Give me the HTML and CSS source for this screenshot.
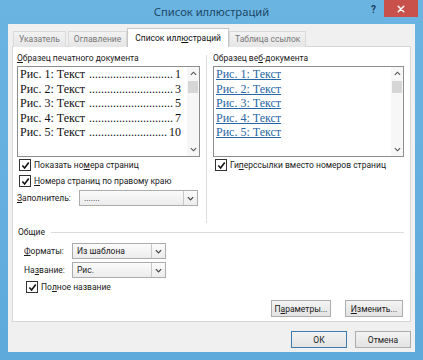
FILE: index.html
```html
<!DOCTYPE html>
<html lang="ru">
<head>
<meta charset="UTF-8" />
<title>Список иллюстраций</title>
<link rel="stylesheet" href="styles.css">
</head>
<body>

<div class="window">
  <!-- Title bar -->
  <div class="titlebar">
    <span></span>
    <h1 class="title">Список иллюстраций</h1>
    <div class="controls">
      <span class="help">?</span>
      <span class="close">
        <svg viewBox="0 0 10 10" width="8" height="8">
          <path d="M1.5 1.5 L8.5 8.5 M8.5 1.5 L1.5 8.5" stroke="#fff" stroke-width="1.8" stroke-linecap="round" />
        </svg>
      </span>
    </div>
  </div>

  <div class="client">
    <div class="tabs">
      <div class="tab">Указатель</div>
      <div class="tab">Оглавление</div>
      <div class="tab active">Список илл<u>ю</u>страций</div>
      <div class="tab">Таблица ссылок</div>
    </div>

    <div class="panel">
      <div class="samples">
        <!-- Print preview -->
        <div class="sample">
          <div class="caption"><u>О</u>бразец печатного документа</div>
          <div class="listbox">
            <div class="items">
              <div class="item"><span>Рис. 1: Текст</span><span class="leader">............................</span><span>1</span></div>
              <div class="item"><span>Рис. 2: Текст</span><span class="leader">............................</span><span>3</span></div>
              <div class="item"><span>Рис. 3: Текст</span><span class="leader">............................</span><span>5</span></div>
              <div class="item"><span>Рис. 4: Текст</span><span class="leader">............................</span><span>7</span></div>
              <div class="item"><span>Рис. 5: Текст</span><span class="leader">..........................</span><span>10</span></div>
            </div>
            <div class="scrollbar">
              <svg class="arrow" viewBox="0 0 8 5" width="7" height="5"><path d="M1 4 L4 1 L7 4" fill="none" stroke="#555" stroke-width="1.3" /></svg>
              <div class="thumb"></div>
              <div class="track"></div>
              <svg class="arrow" viewBox="0 0 8 5" width="7" height="5"><path d="M1 1 L4 4 L7 1" fill="none" stroke="#555" stroke-width="1.3" /></svg>
            </div>
          </div>
          <label class="check first">
            <span class="box"><svg viewBox="0 0 10 10" width="9" height="9"><path d="M1.5 5 L4 7.8 L8.6 1.6" fill="none" stroke="#111" stroke-width="1.7" /></svg></span>
            Показать но<u>м</u>ера страниц
          </label>
          <label class="check">
            <span class="box"><svg viewBox="0 0 10 10" width="9" height="9"><path d="M1.5 5 L4 7.8 L8.6 1.6" fill="none" stroke="#111" stroke-width="1.7" /></svg></span>
            <u>Н</u>омера страниц по правому краю
          </label>
          <div class="field fill">
            <span class="label"><u>З</u>аполнитель:</span>
            <div class="combo wide">
              <span class="value">.......</span>
              <span class="drop"><svg viewBox="0 0 8 5" width="7" height="5"><path d="M1 1 L4 4 L7 1" fill="none" stroke="#444" stroke-width="1.4" /></svg></span>
            </div>
          </div>
        </div>

        <div class="divider"></div>

        <!-- Web preview -->
        <div class="sample">
          <div class="caption">Образец ве<u>б</u>-документа</div>
          <div class="listbox">
            <div class="items links">
              <a class="item">Рис. 1: Текст</a>
              <a class="item">Рис. 2: Текст</a>
              <a class="item">Рис. 3: Текст</a>
              <a class="item">Рис. 4: Текст</a>
              <a class="item">Рис. 5: Текст</a>
            </div>
            <div class="scrollbar">
              <svg class="arrow" viewBox="0 0 8 5" width="7" height="5"><path d="M1 4 L4 1 L7 4" fill="none" stroke="#555" stroke-width="1.3" /></svg>
              <div class="thumb"></div>
              <div class="track"></div>
              <svg class="arrow" viewBox="0 0 8 5" width="7" height="5"><path d="M1 1 L4 4 L7 1" fill="none" stroke="#555" stroke-width="1.3" /></svg>
            </div>
          </div>
          <label class="check first">
            <span class="box"><svg viewBox="0 0 10 10" width="9" height="9"><path d="M1.5 5 L4 7.8 L8.6 1.6" fill="none" stroke="#111" stroke-width="1.7" /></svg></span>
            Ги<u>п</u>ерссылки вместо номеров страниц
          </label>
        </div>
      </div>

      <!-- General -->
      <div class="general">
        <div class="group-title"><span>Общие</span><span class="rule"></span></div>
        <div class="field">
          <span class="label short"><u>Ф</u>орматы:</span>
          <div class="combo">
            <span class="value">Из шаблона</span>
            <span class="drop"><svg viewBox="0 0 8 5" width="7" height="5"><path d="M1 1 L4 4 L7 1" fill="none" stroke="#444" stroke-width="1.4" /></svg></span>
          </div>
        </div>
        <div class="field">
          <span class="label short">На<u>з</u>вание:</span>
          <div class="combo">
            <span class="value">Рис.</span>
            <span class="drop"><svg viewBox="0 0 8 5" width="7" height="5"><path d="M1 1 L4 4 L7 1" fill="none" stroke="#444" stroke-width="1.4" /></svg></span>
          </div>
        </div>
        <label class="check">
          <span class="box"><svg viewBox="0 0 10 10" width="9" height="9"><path d="M1.5 5 L4 7.8 L8.6 1.6" fill="none" stroke="#111" stroke-width="1.7" /></svg></span>
          По<u>л</u>ное название
        </label>
      </div>

      <div class="panel-buttons">
        <button class="btn params">П<u>а</u>раметры...</button>
        <button class="btn edit"><u>И</u>зменить...</button>
      </div>
    </div>

    <div class="footer">
      <button class="btn ok">ОК</button>
      <button class="btn cancel">Отмена</button>
    </div>
  </div>
</div>

</body>
</html>
```

FILE: styles.css
```css
body {
  margin: 0;
  width: 423px;
  height: 360px;
  overflow: hidden;
  background: #64afde;
  font-family: Roboto, 'Noto Sans', sans-serif;
  font-size: 8.5px;
  color: #1a1a1a;
}
u {
  text-decoration-thickness: 1px;
  text-underline-offset: 1px;
}
.window {
  width: 423px;
  height: 360px;
  display: flex;
  flex-direction: column;
  background: linear-gradient(#6ab4e2, #5eaadb);
}

/* Title bar */
.titlebar {
  height: 24px;
  display: grid;
  grid-template-columns: 1fr auto 1fr;
  align-items: start;
}
.title {
  margin: 0;
  font-family: 'Noto Sans', sans-serif;
  font-weight: 400;
  font-size: 11.2px;
  line-height: 24px;
  color: #1d4866;
}
.controls {
  display: flex;
  justify-content: flex-end;
  align-items: flex-start;
  padding-right: 5px;
}
.help {
  font-weight: 700;
  font-size: 10px;
  line-height: 12px;
  margin-top: 4px;
  margin-right: 8px;
  color: #1d3e5c;
}
.close {
  width: 34px;
  height: 17px;
  background: #c9514b;
  display: flex;
  justify-content: center;
  align-items: center;
}

/* Client area */
.client {
  flex: 1;
  margin: 0 8px 8px;
  background: #f0f0f0;
  display: flex;
  flex-direction: column;
}
.tabs {
  display: flex;
  align-items: flex-end;
  height: 23px;
  padding-left: 5px;
  margin-bottom: -1px;
  position: relative;
  z-index: 1;
}
.tab {
  height: 15px;
  line-height: 15px;
  padding: 0 5px;
  margin-right: 2px;
  color: #787878;
  background: linear-gradient(#f2f2f2, #e6e6e6);
  border: 1px solid #d9d9d9;
  border-bottom: none;
}
.tab.active {
  height: 18px;
  line-height: 18px;
  margin: 0 0 0 -2px;
  padding: 0 7px;
  color: #111;
  background: #fff;
  border-color: #c6c6c6;
}
.tab.active + .tab {
  margin-left: 0;
}
.panel {
  margin: 0 4px;
  height: 276px;
  box-sizing: border-box;
  background: #fff;
  border: 1px solid #d6d6d6;
  display: flex;
  flex-direction: column;
}

/* Samples */
.samples {
  display: grid;
  grid-template-columns: 183px 1px 191px;
  column-gap: 6px;
  padding: 5px 0 0 4px;
  height: 176px;
  box-sizing: border-box;
}
.caption {
  height: 13px;
  line-height: 13px;
  margin-bottom: 1px;
}
.divider {
  background: #dcdcdc;
  margin-top: 3px;
}
.listbox {
  height: 91px;
  box-sizing: border-box;
  border: 1px solid #8e8e8e;
  display: flex;
}
.items {
  flex: 1;
  min-width: 0;
  padding: 0 6px 0 2px;
  font-family: 'Liberation Serif', 'Times New Roman', serif;
  font-size: 12px;
  line-height: 14.5px;
  color: #111;
}
.item {
  display: flex;
  justify-content: space-between;
  white-space: nowrap;
}
.leader {
  margin-left: auto;
  padding-right: 2px;
}
.links .item {
  display: block;
  color: #2867a3;
  text-decoration: underline;
  text-decoration-thickness: 1px;
}
.scrollbar {
  width: 12px;
  background: #f7f7f7;
  display: flex;
  flex-direction: column;
  align-items: center;
}
.arrow {
  margin: 4px 0;
}
.thumb {
  width: 10px;
  height: 12px;
  margin-top: 1px;
  background: #d6d6d6;
}
.track {
  flex: 1;
}

/* Checkboxes */
.check {
  display: flex;
  align-items: center;
  height: 12px;
  margin-top: 4px;
  padding-left: 2px;
}
.check.first {
  margin-top: 2px;
}
.box {
  width: 10px;
  height: 10px;
  border: 1px solid #333;
  background: #fff;
  margin-right: 3px;
  display: flex;
  justify-content: center;
  align-items: center;
}

/* Fields */
.field {
  display: flex;
  align-items: center;
  margin-top: 3px;
}
.label {
  width: 62px;
}
.label.short {
  width: 48px;
}
.combo {
  width: 94px;
  height: 16px;
  box-sizing: border-box;
  border: 1px solid #acacac;
  background: linear-gradient(#fbfbfb, #ececec);
  display: flex;
}
.combo.wide {
  width: 119px;
}
.value {
  flex: 1;
  padding-left: 4px;
  line-height: 14px;
}
.drop {
  width: 13px;
  border-left: 1px solid #c8c8c8;
  display: flex;
  justify-content: center;
  align-items: center;
}

/* General group */
.general {
  padding: 0 6px 0 5px;
}
.group-title {
  display: flex;
  align-items: center;
  height: 12px;
  margin-top: 3px;
}
.rule {
  flex: 1;
  height: 1px;
  background: #dcdcdc;
  margin-left: 6px;
}
.general .field {
  padding-left: 6px;
  margin-top: 5px;
}
.general .field + .field {
  margin-top: 3px;
}
.general .check {
  padding-left: 8px;
  margin-top: 3px;
}

/* Buttons */
.btn {
  font: inherit;
  color: #1a1a1a;
  height: 17px;
  padding: 0;
  border: 1px solid #adadad;
  background: linear-gradient(#f3f3f3, #e3e3e3);
}
.panel-buttons {
  display: flex;
  justify-content: flex-end;
  gap: 14px;
  padding-right: 7px;
  margin-top: 7px;
}
.params {
  width: 60px;
}
.edit {
  width: 58px;
}
.footer {
  display: flex;
  justify-content: flex-end;
  gap: 8px;
  padding: 9px 4px 0 0;
}
.ok {
  width: 56px;
  border-color: #3d7bad;
}
.cancel {
  width: 56px;
}
```
